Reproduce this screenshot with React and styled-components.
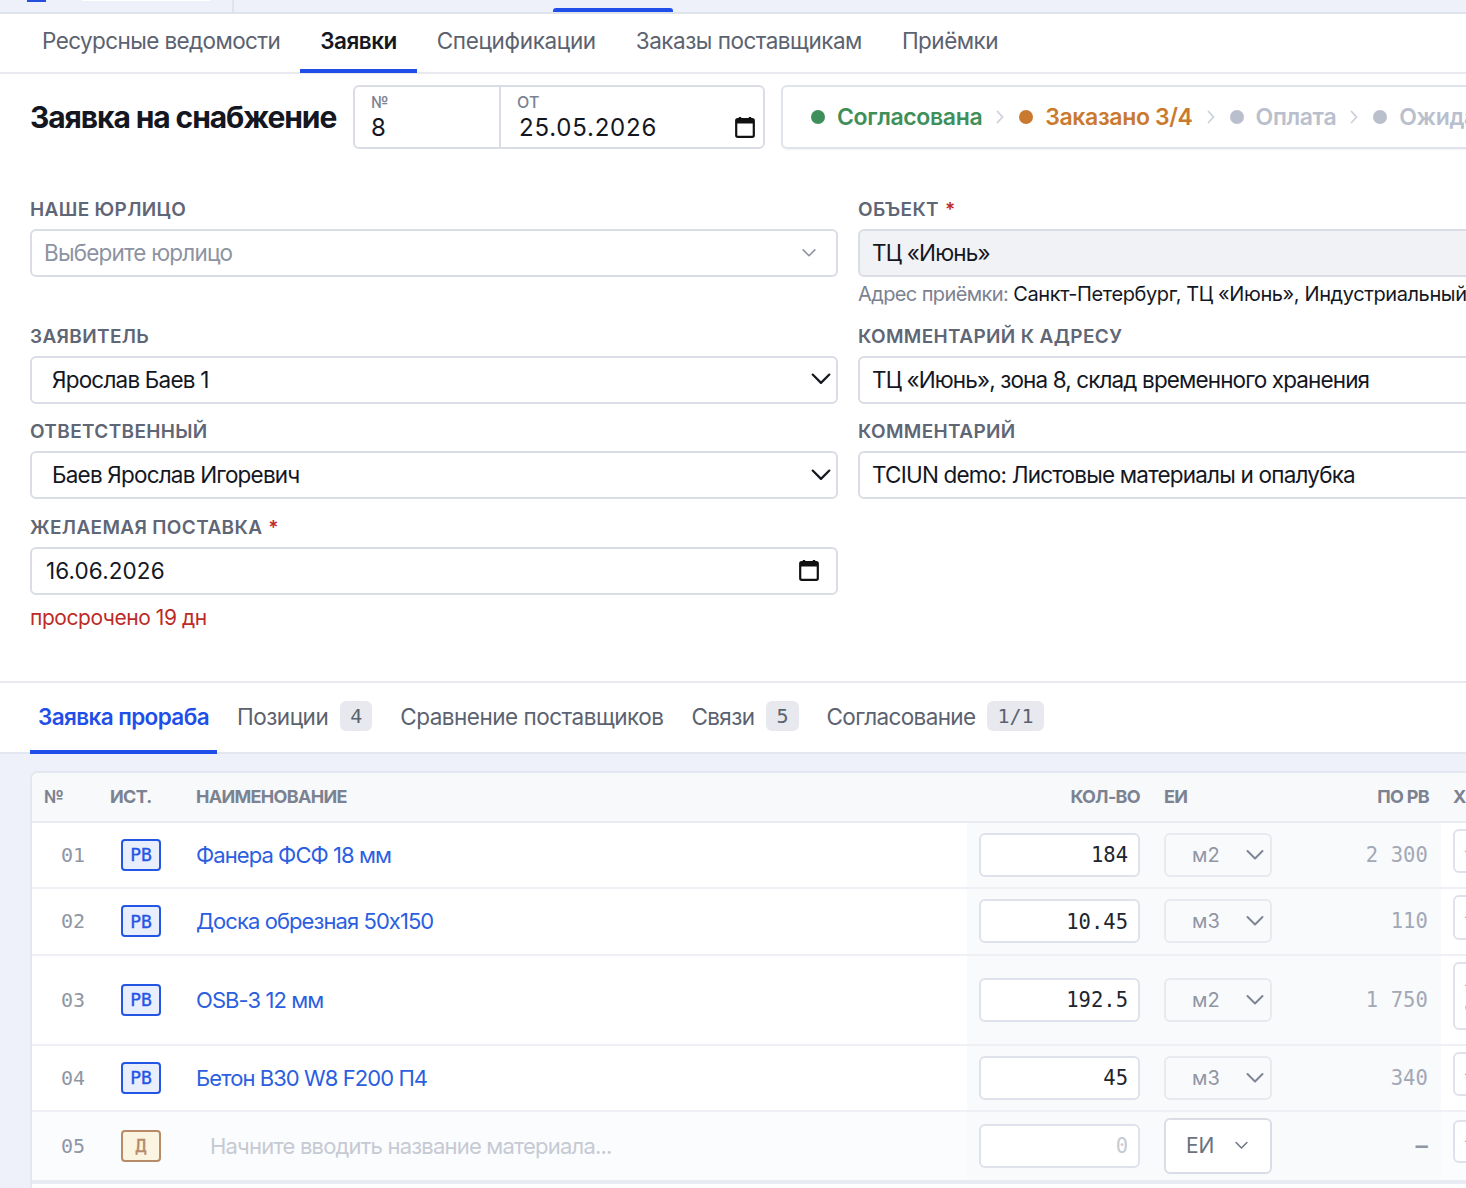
import React from 'react';
import styled, { createGlobalStyle } from 'styled-components';

const GlobalStyle = createGlobalStyle`
  html, body {
    margin: 0;
    padding: 0;
    overflow: hidden;
    background: #fff;
    font-family: Inter, 'Noto Sans', sans-serif;
  }
  * { box-sizing: border-box; }
`;

const monoFont = `'DejaVu Sans Mono', 'Liberation Mono', monospace`;

const Viewport = styled.div`
  width: 100vw;
  height: 100vh;
  overflow: hidden;
`;

const Page = styled.div`
  width: 1696px;
  letter-spacing: -0.45px;
`;

const TopBar = styled.div`
  height: 14px;
  display: flex;
  background: #eef1f9;
  border-bottom: 2px solid #dfe3ec;
`;

const BrandGroup = styled.div`
  width: 234px;
  display: flex;
  gap: 36px;
  padding-left: 27px;
  border-right: 2px solid #dfe3ec;
`;

const BrandMark = styled.div`
  width: 19px;
  height: 2px;
  background: #2450e0;
`;

const BrandPill = styled.div`
  width: 128px;
  height: 1px;
  background: #fff;
`;

const TopIndicator = styled.div`
  align-self: flex-end;
  width: 120px;
  height: 4px;
  margin-left: 319px;
  background: #1f4fe8;
  border-radius: 3px 3px 0 0;
`;

const Nav = styled.nav`
  height: 60px;
  display: flex;
  padding-left: 22px;
  border-bottom: 2px solid #e8eaef;
`;

const NavTab = styled.div`
  height: 59px;
  padding: 0 20px 3px;
  display: flex;
  align-items: center;
  font-size: 22.5px;
  letter-spacing: ${(p) => p.$spacing ?? -0.5}px;
  font-weight: ${(p) => (p.$active ? 600 : 400)};
  color: ${(p) => (p.$active ? '#14171f' : '#5b6270')};
  border-bottom: 4px solid ${(p) => (p.$active ? '#1f4fe8' : 'transparent')};
`;

const Header = styled.div`
  display: flex;
  align-items: center;
  height: 64px;
  margin-top: 11px;
  padding-left: 30px;
`;

const Title = styled.h1`
  margin: 0;
  width: 323px;
  font-size: 30px;
  font-weight: 700;
  letter-spacing: -1.1px;
  color: #14171f;
  white-space: nowrap;
`;

const DocBox = styled.div`
  width: 412px;
  height: 64px;
  display: flex;
  border: 2px solid #dadde5;
  border-radius: 6px;
`;

const DocCell = styled.div`
  position: relative;
  width: ${(p) => p.$width};
  padding: 6px 0 0 16px;
  border-right: ${(p) => (p.$divider ? '2px solid #dadde5' : 'none')};
`;

const DocLabel = styled.div`
  font-size: 16px;
  line-height: 18px;
  font-weight: 500;
  letter-spacing: 0.2px;
  color: #7b8291;
`;

const DocValue = styled.div`
  margin-top: 2px;
  margin-left: ${(p) => p.$indent || 0}px;
  font-size: 24px;
  line-height: 30px;
  color: #14171f;
  letter-spacing: ${(p) => p.$spacing || 0}px;
`;

const CornerIcon = styled.span`
  position: absolute;
  right: 8px;
  bottom: 9px;
  display: flex;
`;

const StatusStrip = styled.div`
  flex: 1;
  height: 64px;
  margin-left: 16px;
  display: flex;
  align-items: center;
  padding-left: 28px;
  border: 2px solid #dfe3ec;
  border-radius: 6px;
  box-shadow: 0 1px 2px rgba(30, 40, 70, 0.06);
`;

const StatusDot = styled.span`
  width: 14px;
  height: 14px;
  border-radius: 50%;
  margin-right: 12px;
  background: ${(p) => p.$color};
`;

const StatusText = styled.span`
  font-size: 23px;
  font-weight: 600;
  letter-spacing: -0.36px;
  color: ${(p) => p.$color};
`;

const StatusArrow = styled.span`
  display: flex;
  margin: 0 15px 0 14px;
`;

const FormGrid = styled.div`
  display: grid;
  grid-template-columns: 808px 808px;
  column-gap: 20px;
  row-gap: 18.4px;
  align-items: start;
  padding: 51px 30px 51px;
`;

const Field = styled.div``;

const FieldLabel = styled.div`
  height: 29px;
  line-height: 20px;
  font-size: 19px;
  font-weight: 600;
  letter-spacing: 0.35px;
  color: #5f6675;
  text-transform: uppercase;
`;

const Required = styled.span`
  margin-left: 6px;
  color: #c02a2a;
`;

const ValueBox = styled.div`
  height: 48px;
  display: flex;
  align-items: center;
  justify-content: space-between;
  padding: 0 ${(p) => p.$right || 0}px 1px ${(p) => p.$left || 12}px;
  border: 2px solid #dadde5;
  border-radius: 6px;
  font-size: 22.5px;
  letter-spacing: ${(p) => p.$spacing ?? -0.8}px;
  white-space: nowrap;
  background: ${(p) => (p.$muted ? '#f1f2f6' : '#fff')};
  color: ${(p) => (p.$placeholder ? '#8d93a1' : '#14171f')};
`;

const Hint = styled.div`
  margin: 6px 0 3.5px;
  font-size: 20px;
  line-height: 22px;
  white-space: nowrap;
  color: #14171f;
  letter-spacing: -0.4px;
`;

const HintLabel = styled.span`
  color: #7b8291;
  letter-spacing: -0.6px;
`;

const ErrorText = styled.div`
  margin-top: 11px;
  font-size: 21px;
  line-height: 24px;
  color: #bd2b26;
`;

const SubTabs = styled.div`
  height: 73px;
  display: flex;
  gap: 12px;
  padding-left: 30px;
  border-top: 2px solid #e8eaef;
  border-bottom: 2px solid #e4e7ef;
`;

const SubTab = styled.div`
  height: 71px;
  padding: 0 8px;
  display: flex;
  align-items: center;
  gap: 12px;
  font-size: 22.5px;
  letter-spacing: ${(p) => p.$spacing ?? -0.5}px;
  font-weight: ${(p) => (p.$active ? 600 : 400)};
  color: ${(p) => (p.$active ? '#1f4fe8' : '#5b6270')};
  border-bottom: 4px solid ${(p) => (p.$active ? '#1f4fe8' : 'transparent')};
`;

const CountBadge = styled.span`
  height: 30px;
  min-width: 32px;
  padding: 0 10px;
  display: flex;
  align-items: center;
  justify-content: center;
  border-radius: 6px;
  background: #e7e9ef;
  font-family: ${monoFont};
  font-size: 20px;
  letter-spacing: 0;
  color: #5b6270;
`;

const TableArea = styled.div`
  padding: 17px 30px 0;
  background: #eef1f9;
  height: 436px;
  overflow: hidden;
`;

const Table = styled.div`
  border: 2px solid #e4e7ef;
  border-radius: 8px 8px 0 0;
  background: #fff;
  overflow: hidden;
`;

const gridColumns = '66px 86px 783px 185px 132px 157px 1fr';

const HeadRow = styled.div`
  display: grid;
  grid-template-columns: ${gridColumns};
  height: 50px;
  align-items: center;
  padding-bottom: 1px;
  background: #f8f9fb;
  border-bottom: 2px solid #e8ebf2;
`;

const HeadCell = styled.div`
  padding: 0 ${(p) => (p.$end ? 12 : 0)}px 0 ${(p) => (p.$end ? 0 : 12)}px;
  font-size: 18px;
  font-weight: 700;
  letter-spacing: -0.7px;
  white-space: nowrap;
  color: #7b8291;
  text-align: ${(p) => (p.$end ? 'right' : 'left')};
`;

const Row = styled.div`
  display: grid;
  grid-template-columns: ${gridColumns};
  align-items: stretch;
  background: ${(p) => (p.$draft ? '#fbfcfe' : '#fff')};
  border-bottom: ${(p) => (p.$draft ? '4px solid #e8ebf3' : '2px solid #eef0f5')};
`;

const Cell = styled.div`
  display: flex;
  align-items: center;
  justify-content: ${(p) => p.$justify || 'flex-start'};
  padding: 0 12px;
  background: ${(p) => (p.$shade ? '#f9fafc' : 'transparent')};
`;

const RowNo = styled(Cell)`
  justify-content: flex-end;
  padding-right: 13px;
  font-family: ${monoFont};
  font-size: 20px;
  letter-spacing: 0;
  color: #8f96a4;
`;

const SourceBadge = styled.span`
  width: 40px;
  height: 32px;
  display: flex;
  align-items: center;
  justify-content: center;
  border-radius: 4px;
  border: 2px solid ${(p) => (p.$draft ? '#b78a68' : '#2456e6')};
  background: ${(p) => (p.$draft ? '#fbf4e0' : '#e9eefc')};
  color: ${(p) => (p.$draft ? '#b78a68' : '#2456e6')};
  font-family: ${monoFont};
  font-size: 18px;
  letter-spacing: 0;
  -webkit-text-stroke: 0.35px currentColor;
`;

const ItemName = styled.span`
  font-size: 22px;
  white-space: nowrap;
  letter-spacing: ${(p) => (p.$placeholder ? -0.8 : -0.93)}px;
  color: ${(p) => (p.$placeholder ? '#c6cad3' : '#2b5fe0')};
  margin-left: ${(p) => (p.$placeholder ? 14 : 0)}px;
  margin-top: ${(p) => (p.$placeholder ? 1 : 0)}px;
`;

const QtyInput = styled.div`
  width: 161px;
  height: 44px;
  display: flex;
  align-items: center;
  justify-content: flex-end;
  padding: 1px 10px 0 0;
  border: 2px solid #dfe2ea;
  border-radius: 6px;
  background: #fff;
  font-family: ${monoFont};
  font-size: 20.5px;
  letter-spacing: 0;
  color: ${(p) => (p.$empty ? '#c6cad3' : '#20252f')};
`;

const UnitSelect = styled.div`
  width: 108px;
  height: ${(p) => (p.$open ? 56 : 44)}px;
  display: flex;
  align-items: center;
  justify-content: space-between;
  padding: ${(p) => (p.$open ? '0 22px 0 20px' : '0 6px 0 26px')};
  border: 2px solid ${(p) => (p.$open ? '#dadde5' : '#e8eaf0')};
  border-radius: 6px;
  background: ${(p) => (p.$open ? '#fff' : '#f9fafc')};
  font-size: ${(p) => (p.$open ? 21 : 20)}px;
  letter-spacing: 0;
  color: ${(p) => (p.$open ? '#6b7280' : '#8f96a4')};
`;

const PlanValue = styled(Cell)`
  justify-content: flex-end;
  padding-right: 13px;
  font-family: ${monoFont};
  font-size: 20.5px;
  font-weight: ${(p) => (p.$dash ? 700 : 400)};
  letter-spacing: 0.1px;
  color: ${(p) => (p.$dash ? '#8f96a4' : '#a2a8b5')};
  white-space: pre;
`;

const NoteCell = styled.div`
  padding: ${(p) => (p.$draft ? '8px 12px 17px' : '6px 12px 14px')};
`;

const NoteBox = styled.div`
  width: 190px;
  height: ${(p) => p.$height}px;
  display: flex;
  flex-direction: column;
  justify-content: center;
  padding-left: 10px;
  border: 2px solid #dfe2ea;
  border-radius: 6px;
  background: #fff;
  font-size: 15px;
  line-height: 22px;
  color: #a2a8b5;
`;

const NoteLine = styled.span`
  color: ${(p) => (p.$dark ? '#20252f' : 'inherit')};
`;

const TableFooter = styled.div`
  height: 20px;
  background: #fff;
`;

const Chevron = ({ size, color, width = 2 }) => (
  <svg width={size} height={size} viewBox="0 0 18 18" fill="none">
    <path d="M1.5 5 L9 12.5 L16.5 5" stroke={color} strokeWidth={width} strokeLinecap="round" strokeLinejoin="round" />
  </svg>
);

const StepArrow = () => (
  <svg width="8" height="16" viewBox="0 0 8 16" fill="none">
    <path d="M1.5 2.5 L6.5 8 L1.5 13.5" stroke="#cdd1da" strokeWidth="1.8" strokeLinecap="round" />
  </svg>
);

const CalendarIcon = () => (
  <svg width="20" height="22" viewBox="0 0 20 22" fill="none">
    <path d="M5 1v4M15 1v4" stroke="#111" strokeWidth="2.4" />
    <rect x="1.2" y="3.2" width="17.6" height="17.6" rx="1.5" stroke="#111" strokeWidth="2.2" />
    <rect x="1" y="3" width="18" height="4.5" fill="#111" />
  </svg>
);

const steps = [
  { label: 'Согласована', color: '#3f8f5a', dot: '#3f8f5a' },
  { label: 'Заказано 3/4', color: '#c97a2f', dot: '#c97a2f' },
  { label: 'Оплата', color: '#b9bfcd', dot: '#b9bfcd' },
  { label: 'Ожидание', color: '#b9bfcd', dot: '#b9bfcd' },
];

const rows = [
  { no: '01', name: 'Фанера ФСФ 18 мм', qty: '184', unit: 'м2', plan: '2 300', note: 44 },
  { no: '02', name: 'Доска обрезная 50х150', qty: '10.45', unit: 'м3', plan: '110', note: 44.9 },
  { no: '03', name: 'OSB-3 12 мм', qty: '192.5', unit: 'м2', plan: '1 750', note: 68, long: true },
  { no: '04', name: 'Бетон B30 W8 F200 П4', qty: '45', unit: 'м3', plan: '340', note: 44 },
];

export default function App() {
  return (
    <Viewport>
      <GlobalStyle />
      <Page>
        <TopBar>
          <BrandGroup>
            <BrandMark />
            <BrandPill />
          </BrandGroup>
          <TopIndicator />
        </TopBar>

        <Nav>
          <NavTab $spacing={-0.6}>Ресурсные ведомости</NavTab>
          <NavTab $active>Заявки</NavTab>
          <NavTab $spacing={-0.35}>Спецификации</NavTab>
          <NavTab>Заказы поставщикам</NavTab>
          <NavTab>Приёмки</NavTab>
        </Nav>

        <Header>
          <Title>Заявка на снабжение</Title>
          <DocBox>
            <DocCell $width="146px" $divider>
              <DocLabel>№</DocLabel>
              <DocValue>8</DocValue>
            </DocCell>
            <DocCell $width="262px">
              <DocLabel>ОТ</DocLabel>
              <DocValue $indent={2} $spacing={0.8}>25.05.2026</DocValue>
              <CornerIcon><CalendarIcon /></CornerIcon>
            </DocCell>
          </DocBox>
          <StatusStrip>
            {steps.map((step, index) => (
              <React.Fragment key={step.label}>
                <StatusDot $color={step.dot} />
                <StatusText $color={step.color}>{step.label}</StatusText>
                {index < steps.length - 1 && <StatusArrow><StepArrow /></StatusArrow>}
              </React.Fragment>
            ))}
          </StatusStrip>
        </Header>

        <FormGrid>
          <Field>
            <FieldLabel>Наше юрлицо</FieldLabel>
            <ValueBox $placeholder $right={20}>
              Выберите юрлицо
              <Chevron size={14} color="#8d93a1" />
            </ValueBox>
          </Field>
          <Field>
            <FieldLabel>Объект<Required>*</Required></FieldLabel>
            <ValueBox $muted>ТЦ «Июнь»</ValueBox>
            <Hint>
              <HintLabel>Адрес приёмки: </HintLabel>
              Санкт-Петербург, ТЦ «Июнь», Индустриальный проспект, 24
            </Hint>
          </Field>

          <Field>
            <FieldLabel>Заявитель</FieldLabel>
            <ValueBox $left={20} $right={5}>
              Ярослав Баев 1
              <Chevron size={20} color="#14171f" />
            </ValueBox>
          </Field>
          <Field>
            <FieldLabel>Комментарий к адресу</FieldLabel>
            <ValueBox $spacing={-0.88}>ТЦ «Июнь», зона 8, склад временного хранения</ValueBox>
          </Field>

          <Field>
            <FieldLabel>Ответственный</FieldLabel>
            <ValueBox $left={20} $right={5}>
              Баев Ярослав Игоревич
              <Chevron size={20} color="#14171f" />
            </ValueBox>
          </Field>
          <Field>
            <FieldLabel>Комментарий</FieldLabel>
            <ValueBox>TCIUN demo: Листовые материалы и опалубка</ValueBox>
          </Field>

          <Field>
            <FieldLabel>Желаемая поставка<Required>*</Required></FieldLabel>
            <ValueBox $right={17} $left={14} $spacing={0.1}>
              16.06.2026
              <CalendarIcon />
            </ValueBox>
            <ErrorText>просрочено 19 дн</ErrorText>
          </Field>
        </FormGrid>

        <SubTabs>
          <SubTab $active $spacing={-0.6}>Заявка прораба</SubTab>
          <SubTab>Позиции<CountBadge>4</CountBadge></SubTab>
          <SubTab>Сравнение поставщиков</SubTab>
          <SubTab $spacing={-0.6}>Связи<CountBadge>5</CountBadge></SubTab>
          <SubTab $spacing={-0.65}>Согласование<CountBadge>1/1</CountBadge></SubTab>
        </SubTabs>

        <TableArea>
          <Table>
            <HeadRow>
              <HeadCell>№</HeadCell>
              <HeadCell>ИСТ.</HeadCell>
              <HeadCell>НАИМЕНОВАНИЕ</HeadCell>
              <HeadCell $end>КОЛ-ВО</HeadCell>
              <HeadCell>ЕИ</HeadCell>
              <HeadCell $end>ПО РВ</HeadCell>
              <HeadCell>ХАРАКТЕРИСТИКИ</HeadCell>
            </HeadRow>

            {rows.map((row) => (
              <Row key={row.no}>
                <RowNo>{row.no}</RowNo>
                <Cell $justify="center"><SourceBadge>РВ</SourceBadge></Cell>
                <Cell><ItemName>{row.name}</ItemName></Cell>
                <Cell $shade><QtyInput>{row.qty}</QtyInput></Cell>
                <Cell $shade>
                  <UnitSelect>
                    {row.unit}
                    <Chevron size={18} color="#7d8494" />
                  </UnitSelect>
                </Cell>
                <PlanValue $shade>{row.plan}</PlanValue>
                <NoteCell>
                  <NoteBox $height={row.note}>
                    <NoteLine>—</NoteLine>
                    {row.long && <NoteLine $dark>с</NoteLine>}
                  </NoteBox>
                </NoteCell>
              </Row>
            ))}

            <Row $draft>
              <RowNo>05</RowNo>
              <Cell $justify="center"><SourceBadge $draft>Д</SourceBadge></Cell>
              <Cell><ItemName $placeholder>Начните вводить название материала...</ItemName></Cell>
              <Cell $shade><QtyInput $empty>0</QtyInput></Cell>
              <Cell $shade>
                <UnitSelect $open>
                  ЕИ
                  <Chevron size={13} color="#6b7280" />
                </UnitSelect>
              </Cell>
              <PlanValue $shade $dash>–</PlanValue>
              <NoteCell $draft>
                <NoteBox $height={43}>
                  <NoteLine>—</NoteLine>
                </NoteBox>
              </NoteCell>
            </Row>
            <TableFooter />
          </Table>
        </TableArea>
      </Page>
    </Viewport>
  );
}
